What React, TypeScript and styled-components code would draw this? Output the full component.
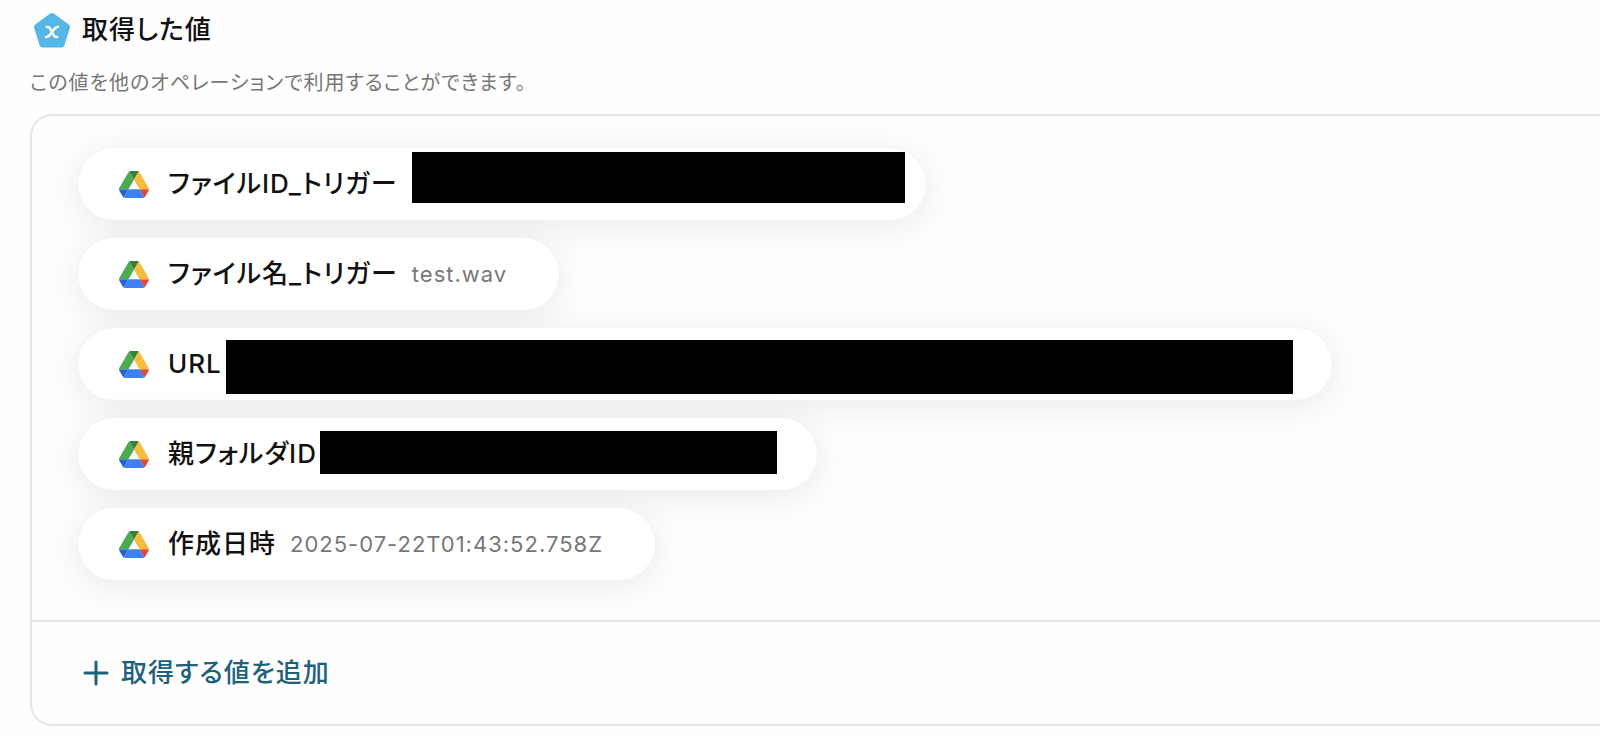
import React from "react";
import styled, { createGlobalStyle } from "styled-components";

const GlobalStyle = createGlobalStyle`
  *, *::before, *::after { box-sizing: border-box; }
  body {
    margin: 0;
    background: #fefefe;
    color: #111;
    font-family: Inter, "Noto Sans CJK JP", sans-serif;
    font-feature-settings: "palt";
    letter-spacing: 1px;
    overflow-x: hidden;
  }
`;

const Page = styled.main`
  padding: 10px 0 10px 30px;
`;

const Heading = styled.h1`
  display: flex;
  align-items: center;
  gap: 10px;
  margin: 0;
  padding-left: 2px;
  height: 40px;
  font-size: 26px;
  font-weight: 500;
  line-height: 40px;
`;

const Description = styled.p`
  margin: 16px 0 14px;
  color: #777;
  font-size: 20px;
  line-height: 34px;
`;

const Panel = styled.section`
  border: 2px solid #e5e5e5;
  border-right: 0;
  border-radius: 22px 0 0 22px;
`;

const ValueList = styled.ul`
  display: flex;
  flex-direction: column;
  align-items: flex-start;
  gap: 18px;
  margin: 0;
  padding: 32px 46px 40px;
  list-style: none;
`;

const Pill = styled.li`
  display: flex;
  align-items: center;
  height: 72px;
  padding: 0 52px 0 41px;
  border-radius: 36px;
  background: #fff;
  box-shadow: 0 0 0 1px #f3f3f3, 0 6px 36px rgba(0, 0, 0, 0.09);
`;

const Label = styled.span`
  margin: 0 14px 0 19px;
  font-size: 26px;
  font-weight: 500;
  line-height: 36px;
`;

const Value = styled.span`
  color: #777;
  font-size: 22px;
  line-height: 36px;
`;

const HiddenValue = styled.span<{ $width: number }>`
  position: relative;
  align-self: stretch;
  width: ${(p) => p.$width}px;
`;

const Redaction = styled.span<{ $inset: string }>`
  position: absolute;
  inset: ${(p) => p.$inset};
  background: #000;
`;

const Footer = styled.footer`
  padding: 31px 51px;
  border-top: 2px solid #e5e5e5;
`;

const AddButton = styled.button`
  display: flex;
  align-items: center;
  gap: 12px;
  padding: 0;
  border: 0;
  background: none;
  color: #1d617c;
  font: inherit;
  font-feature-settings: inherit;
  letter-spacing: inherit;
  font-size: 26px;
  font-weight: 500;
  line-height: 40px;
  cursor: pointer;
`;

const VariableIcon = () => (
  <svg width="40" height="40" viewBox="0 0 40 40" aria-hidden="true">
    <path
      d="M20 6 35 17 29.500 34.500H10.500L5 17Z"
      fill="#55b7e5"
      stroke="#55b7e5"
      strokeWidth="6"
      strokeLinejoin="round"
    />
    <path
      d="M14.800 17c2.800-.4 3.400 1.200 5.200 5s2.400 5.400 5.200 5M26 17c-2.800-.2-3.600 1.600-6 5s-3.200 5.200-6 5"
      fill="none"
      stroke="#fff"
      strokeWidth="2.400"
      strokeLinecap="round"
    />
  </svg>
);

const DriveIcon = () => (
  <svg width="30" height="27" viewBox="0 0 87.300 78" aria-hidden="true">
    <path fill="#2563d0" d="m6.600 66.850 3.850 6.650c.8 1.400 1.950 2.500 3.300 3.300L27.500 53H0c0 1.550.4 3.100 1.200 4.500z" />
    <path fill="#4caa50" d="M43.650 25 29.900 1.200c-1.350.8-2.500 1.900-3.300 3.300l-25.400 44A9 9 0 0 0 0 53h27.500z" />
    <path fill="#dd4b39" d="M73.550 76.800c1.350-.8 2.500-1.900 3.300-3.300l1.600-2.750L86.100 57.500c.8-1.400 1.200-2.950 1.200-4.500H59.800l5.850 11.500z" />
    <path fill="#35803a" d="M43.650 25 57.400 1.200C56.050.4 54.500 0 52.900 0H34.400c-1.600 0-3.150.45-4.500 1.200z" />
    <path fill="#4080f5" d="M59.800 53H27.500L13.750 76.800c1.350.8 2.900 1.200 4.500 1.200h50.800c1.600 0 3.150-.45 4.500-1.200z" />
    <path fill="#f8bb42" d="m73.400 26.500-12.700-22c-.8-1.400-1.950-2.500-3.300-3.300L43.650 25 59.800 53h27.450c0-1.550-.4-3.100-1.200-4.500z" />
  </svg>
);

const PlusIcon = () => (
  <svg width="26" height="26" viewBox="0 0 26 26" aria-hidden="true">
    <path d="M13 2v22M2 13h22" stroke="currentColor" strokeWidth="3" strokeLinecap="round" />
  </svg>
);

type Item = {
  label: string;
  value?: string;
  hidden?: { width: number; inset: string };
};

const items: Item[] = [
  { label: "ファイルID_トリガー", hidden: { width: 462, inset: "4px -31px 17px 0" } },
  { label: "ファイル名_トリガー", value: "test.wav" },
  { label: "URL", hidden: { width: 1044, inset: "12px -13px 6px -10px" } },
  { label: "親フォルダID", hidden: { width: 434, inset: "13px -12px 16px -11px" } },
  { label: "作成日時", value: "2025-07-22T01:43:52.758Z" },
];

export default function App() {
  return (
    <>
      <GlobalStyle />
      <Page>
        <Heading>
          <VariableIcon />
          取得した値
        </Heading>
        <Description>この値を他のオペレーションで利用することができます。</Description>
        <Panel>
          <ValueList>
            {items.map(({ label, value, hidden }) => (
              <Pill key={label}>
                <DriveIcon />
                <Label>{label}</Label>
                {value && <Value>{value}</Value>}
                {hidden && (
                  <HiddenValue $width={hidden.width}>
                    <Redaction $inset={hidden.inset} />
                  </HiddenValue>
                )}
              </Pill>
            ))}
          </ValueList>
          <Footer>
            <AddButton type="button">
              <PlusIcon />
              取得する値を追加
            </AddButton>
          </Footer>
        </Panel>
      </Page>
    </>
  );
}
